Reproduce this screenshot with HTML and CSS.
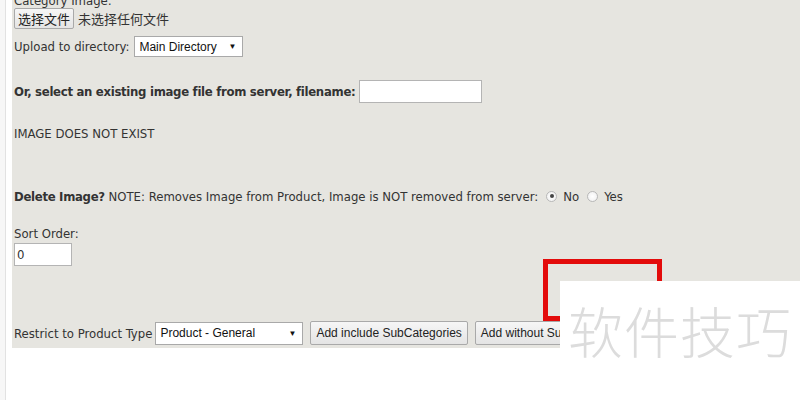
FILE: index.html
```html
<!DOCTYPE html>
<html lang="en">
<head>
    <meta charset="UTF-8">
    <title>Category Image</title>
    <link rel="stylesheet" href="styles.css">
</head>
<body>
    <div class="frame">
        <div class="panel">
            <div class="row row-top">Category Image:</div>
            <div class="row row-file">
                <button class="btn btn-file">选择文件</button>
                <span class="file-name">未选择任何文件</span>
            </div>
            <div class="row row-upload">
                <span>Upload to directory:</span>
                <span class="select select-dir">Main Directory<span class="arrow">&#9660;</span></span>
            </div>
            <div class="row row-server">
                <b>Or, select an existing image file from server, filename:</b>
                <span class="text-input input-file"></span>
            </div>
            <div class="row row-missing">IMAGE DOES NOT EXIST</div>
            <div class="row row-delete">
                <b>Delete Image?</b>&nbsp;NOTE: Removes Image from Product, Image is NOT removed from server:
                <span class="radio checked"></span><span class="radio-label">No</span>
                <span class="radio"></span><span class="radio-label">Yes</span>
            </div>
            <div class="row row-sort">Sort Order:</div>
            <div class="row row-sort-input">
                <span class="text-input input-sort">0</span>
            </div>
            <div class="row row-bottom">
                <span>Restrict to Product Type</span>
                <span class="select select-type">Product - General<span class="arrow">&#9660;</span></span>
                <button class="btn">Add include SubCategories</button>
                <button class="btn">Add without SubCategories</button>
            </div>
        </div>
    </div>

    <div class="red-mark"></div>
    <div class="watermark">软件技巧</div>
</body>
</html>
```

FILE: styles.css
```css
body {
    margin: 0;
    background-color: #f7f7f7;
    font-family: "DejaVu Sans Condensed", "DejaVu Sans", sans-serif;
    font-size: 13px;
    color: #333;
    height: 400px;
    overflow: hidden;
    position: relative;
}
b {
    letter-spacing: -0.3px;
}
.frame {
    margin-left: 5px;
    padding-left: 6px;
    border-left: 1px solid #e2e2e2;
    background-color: #fff;
    height: 400px;
}
.panel {
    background-color: #e6e5e0;
    padding: 0 0 3px 2px;
    overflow: hidden;
}
.row {
    display: flex;
    align-items: center;
    white-space: nowrap;
}
.row-top {
    height: 16px;
    margin-top: -8px;
}
.row-file {
    height: 21px;
}
.row-upload {
    height: 21px;
    margin-top: 7px;
}
.row-server {
    height: 23px;
    margin-top: 23px;
}
.row-missing {
    height: 16px;
    margin-top: 22px;
}
.row-delete {
    height: 16px;
    margin-top: 47px;
}
.row-sort {
    height: 16px;
    margin-top: 21px;
}
.row-sort-input {
    height: 23px;
    margin-top: 2px;
}
.row-bottom {
    height: 24px;
    margin-top: 55px;
}
.btn {
    font-family: "Liberation Sans", Arial, sans-serif;
    font-size: 12px;
    color: #222;
    background: linear-gradient(#f6f6f6, #e4e4e4);
    border: 1px solid #a9a9a9;
    border-radius: 2px;
    height: 24px;
    padding: 0 5px;
    margin: 0 0 0 7px;
}
.btn-file {
    font-family: "Noto Sans CJK SC", sans-serif;
    font-size: 13px;
    height: 21px;
    width: 60px;
    padding: 0;
    margin: 0;
}
.file-name {
    font-family: "Noto Sans CJK SC", sans-serif;
    font-size: 13px;
    margin-left: 4px;
}
.select {
    display: flex;
    align-items: center;
    justify-content: space-between;
    box-sizing: border-box;
    background-color: #fff;
    border: 1px solid #a9a9a9;
    font-family: "Liberation Sans", Arial, sans-serif;
    font-size: 12px;
    color: #111;
    padding: 0 6px 0 4px;
}
.select-dir {
    width: 109px;
    height: 21px;
    margin-left: 5px;
}
.select-type {
    width: 148px;
    height: 23px;
    margin-left: 3px;
}
.arrow {
    font-size: 8px;
}
.text-input {
    display: inline-flex;
    align-items: center;
    box-sizing: border-box;
    background-color: #fff;
    border: 1px solid #b4b4b4;
    padding-left: 2px;
    height: 23px;
}
.input-file {
    width: 123px;
    margin-left: 4px;
}
.input-sort {
    width: 58px;
}
.radio {
    display: inline-block;
    box-sizing: border-box;
    width: 11px;
    height: 11px;
    border: 1px solid #b8b8b8;
    border-radius: 50%;
    background: radial-gradient(#fff, #eee);
    margin: 0 6px 0 8px;
    position: relative;
}
.radio.checked::after {
    content: "";
    position: absolute;
    left: 2.5px;
    top: 2.5px;
    width: 4px;
    height: 4px;
    border-radius: 50%;
    background-color: #444;
}
.red-mark {
    position: absolute;
    left: 543px;
    top: 259px;
    width: 119px;
    height: 62px;
    box-sizing: border-box;
    border: 5px solid #e30b0b;
}
.watermark {
    position: absolute;
    left: 560px;
    top: 281px;
    width: 240px;
    height: 119px;
    background-color: #fff;
    color: #dcdcdc;
    font-family: "Noto Sans CJK SC", sans-serif;
    font-weight: 300;
    font-size: 55px;
    letter-spacing: 1px;
    padding: 8px 0 0 8px;
    box-sizing: border-box;
    white-space: nowrap;
}
```
